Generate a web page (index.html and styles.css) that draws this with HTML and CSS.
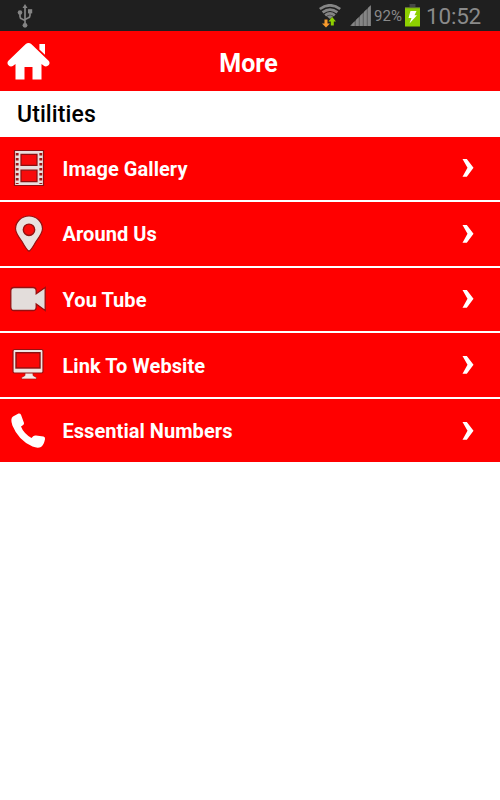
FILE: index.html
```html
<!DOCTYPE html>
<html lang="en">
<head>
    <meta charset="UTF-8">
    <meta name="viewport" content="width=device-width, initial-scale=1.0">
    <title>More</title>
    <link rel="stylesheet" href="styles.css">
</head>
<body>
    <!-- Status bar -->
    <div class="status-bar">
        <svg class="usb" width="16" height="24" viewBox="0 0 16 24" fill="#858585" stroke="#858585">
            <path d="M8 0L10.5 4H5.5Z" stroke="none"/>
            <path d="M8 3V21M3 8.5V12.5Q3 14.5 5 15L8 16.5M13 7.5V11.5Q13 13.5 11 14L8 15.5" fill="none" stroke-width="1.7"/>
            <circle cx="3" cy="8.5" r="2.3" stroke="none"/>
            <rect x="11" y="5.2" width="4.2" height="4.2" stroke="none"/>
            <circle cx="8" cy="21.3" r="2.4" stroke="none"/>
        </svg>
        <div class="status-right">
            <svg class="wifi" width="22" height="24" viewBox="0 0 22 24">
                <g fill="none" stroke="#858585" stroke-width="2.7">
                    <path d="M0.8 5Q11 -2.4 21.2 5"/>
                    <path d="M3.6 8.4Q11 2.7 18.4 8.4"/>
                    <path d="M6.2 11.4Q11 7.4 15.8 11.4"/>
                </g>
                <path d="M8 12.4Q11 10 14 12.4L11 15Z" fill="#858585"/>
                <path d="M5.5 15.5H8.5V19.5H11L7 23.5L3 19.5H5.5Z" fill="#f79a2c"/>
                <path d="M11.8 21.5H14.8V17.5H17L13.2 13L9.4 17.5H11.8Z" fill="#8ed000"/>
            </svg>
            <svg class="signal" width="21" height="22" viewBox="0 0 21 22">
                <path d="M0 21L21 0V21Z" fill="#666"/>
                <path d="M1.5 21V19.5L4.5 16.5V21ZM6 21V15L8.7 12.3V21ZM10 21V11L12.7 8.3V21ZM14 21V7L16.7 4.3V21ZM18 21V3L20.6 0.4V21Z" fill="#858585"/>
            </svg>
            <span class="percent">92%</span>
            <svg class="battery" width="15" height="23" viewBox="0 0 15 23">
                <rect x="4.5" y="0" width="6" height="3" fill="#454545"/>
                <rect x="0" y="3" width="15" height="2" fill="#5d6a35"/>
                <rect x="0" y="4.2" width="15" height="18.3" fill="#8ed000"/>
                <path d="M5.5 7H11.5L9.5 11.3H12L4.5 19.5L6.5 14H3.5Z" fill="#fff"/>
            </svg>
            <span class="clock">10:52</span>
        </div>
    </div>

    <!-- Title -->
    <header class="header">
        <svg class="home" width="44" height="39" viewBox="0 0 44 39" fill="#fff">
            <path d="M21.5 1Q23 1 24.5 2.3L41.6 18.7Q43.5 21 41.5 23.3Q39.2 25.5 36.5 23.5L34.5 22V37.5H25.5V25H17.5V37.5H8.5V22L6.5 23.5Q3.7 25.4 1.5 23.2Q-0.5 21 1.4 18.7L18.5 2.3Q20 1 21.5 1Z"/>
            <path d="M32.4 2H38V12.8L32.4 7.4Z"/>
        </svg>
        <h1>More</h1>
    </header>

    <h2 class="section-title">Utilities</h2>

    <!-- Menu -->
    <ul class="menu">
        <li class="menu-item">
            <svg class="icon" width="38" height="38" viewBox="0 0 38 38">
                <path d="M4.5 1.5H33.5V36.5H4.5Z" fill="#e9dfdd" stroke="#8d1010" stroke-width="1.2"/>
                <path d="M11 5.3H27V16.4H11ZM11 21.2H27V32.6H11Z" fill="#f80b0b" stroke="#8d1010" stroke-width="1.2"/>
                <path d="M7.2 4V35M30.8 4V35" stroke="#a01616" stroke-width="2.8" stroke-dasharray="2.6 2.4"/>
            </svg>
            <span class="label">Image Gallery</span>
            <svg class="arrow" width="12" height="20" viewBox="0 0 12 20"><path d="M0.5 1H4.8L11.5 9.8L4.8 18.8H0.5L5.5 9.8Z"/></svg>
        </li>
        <li class="menu-item">
            <svg class="icon" width="38" height="38" viewBox="0 0 38 38">
                <path d="M19 36.3Q16.5 34.8 12 26.5Q5.5 18 5.5 13.8A13.5 12.8 0 0 1 32.5 13.8Q32.5 18 26 26.5Q21.5 34.8 19 36.3Z" fill="#e9e2e0" stroke="#951010" stroke-width="1.2"/>
                <circle cx="19" cy="14.8" r="5.7" fill="#f80b0b" stroke="#951010" stroke-width="1.4"/>
            </svg>
            <span class="label">Around Us</span>
            <svg class="arrow" width="12" height="20" viewBox="0 0 12 20"><path d="M0.5 1H4.8L11.5 9.8L4.8 18.8H0.5L5.5 9.8Z"/></svg>
        </li>
        <li class="menu-item">
            <svg class="icon" width="38" height="38" viewBox="0 0 38 38">
                <path d="M4 7.5H23Q26.2 7.5 26.2 11V13.8L35.2 7.5V30.5L26.2 24V27Q26.2 30.5 23 30.5H4Q0.8 30.5 0.8 27V11Q0.8 7.5 4 7.5Z" fill="#e3dddb" stroke="#951010" stroke-width="1.3"/>
            </svg>
            <span class="label">You Tube</span>
            <svg class="arrow" width="12" height="20" viewBox="0 0 12 20"><path d="M0.5 1H4.8L11.5 9.8L4.8 18.8H0.5L5.5 9.8Z"/></svg>
        </li>
        <li class="menu-item">
            <svg class="icon" width="38" height="38" viewBox="0 0 38 38">
                <path d="M15 26H23V29.5L26.5 31.5V33H11.5V31.5L15 29.5Z" fill="#f1eae8" stroke="#b01010" stroke-width="0.7"/>
                <rect x="3" y="3.5" width="30" height="23.5" rx="1.5" fill="#eee5e3" stroke="#951010" stroke-width="1.2"/>
                <rect x="6" y="6.7" width="24" height="15.3" fill="#fa0808" stroke="#8d1010" stroke-width="1.4"/>
            </svg>
            <span class="label">Link To Website</span>
            <svg class="arrow" width="12" height="20" viewBox="0 0 12 20"><path d="M0.5 1H4.8L11.5 9.8L4.8 18.8H0.5L5.5 9.8Z"/></svg>
        </li>
        <li class="menu-item">
            <svg class="icon" width="38" height="38" viewBox="0 0 38 38">
                <path d="M3 4.5L8.5 1.5Q10.3 1.2 11 2.8L14 11Q14.3 12.5 12.8 13.3L11 14.4Q13.4 21 21.5 26L23.2 24.3Q24.3 23.3 26 23.5L33.5 24.5Q35.5 25 35 27.3Q33.8 33.3 31 35Q27.5 36.5 22.5 34.5Q8.5 28.5 2.4 13.5Q0 6.5 3 4.5Z" fill="#fff"/>
            </svg>
            <span class="label">Essential Numbers</span>
            <svg class="arrow" width="12" height="20" viewBox="0 0 12 20"><path d="M0.5 1H4.8L11.5 9.8L4.8 18.8H0.5L5.5 9.8Z"/></svg>
        </li>
    </ul>
</body>
</html>
```

FILE: styles.css
```css
body {
    margin: 0;
    background-color: #fff;
    font-family: Roboto, sans-serif;
}
.status-bar {
    display: flex;
    justify-content: space-between;
    height: 31px;
    padding: 0 18px 0 17px;
    background-color: #1f1f1f;
    color: #8a8a8a;
}
.usb {
    margin-top: 4px;
}
.status-right {
    display: flex;
}
.wifi {
    margin: 4px 9px 0 0;
}
.signal {
    margin: 5px 3px 0 0;
}
.percent {
    width: 29px;
    margin-right: 2px;
    font-size: 15px;
    line-height: 33px;
    letter-spacing: 0.1px;
}
.battery {
    margin: 4px 6px 0 0;
}
.clock {
    width: 56px;
    font-size: 22.5px;
    font-weight: 400;
    line-height: 32px;
    letter-spacing: -0.2px;
    white-space: nowrap;
}
.header {
    display: grid;
    grid-template-columns: 50px 1fr 53px;
    align-items: center;
    height: 60px;
    background-color: #f00;
}
.home {
    margin-left: 7px;
}
.header h1 {
    margin: 5px 0 0;
    color: #fff;
    font-size: 25px;
    font-weight: 700;
    line-height: 30px;
    text-align: center;
}
.section-title {
    height: 45.5px;
    margin: 0;
    padding-left: 17px;
    color: #000;
    font-size: 23px;
    font-weight: 500;
    line-height: 47px;
    letter-spacing: 0.1px;
}
.menu {
    display: flex;
    flex-direction: column;
    gap: 2px;
    margin: 0;
    padding: 0;
    list-style: none;
}
.menu-item {
    display: flex;
    align-items: center;
    height: 63.6px;
    padding: 0 26px 0 10px;
    background-color: #f00;
}
.label {
    flex: 1;
    margin: 1px 0 0 14.5px;
    color: #fff;
    font-size: 20px;
    font-weight: 700;
    letter-spacing: 0.05px;
}
.arrow {
    fill: #fff;
}
```
